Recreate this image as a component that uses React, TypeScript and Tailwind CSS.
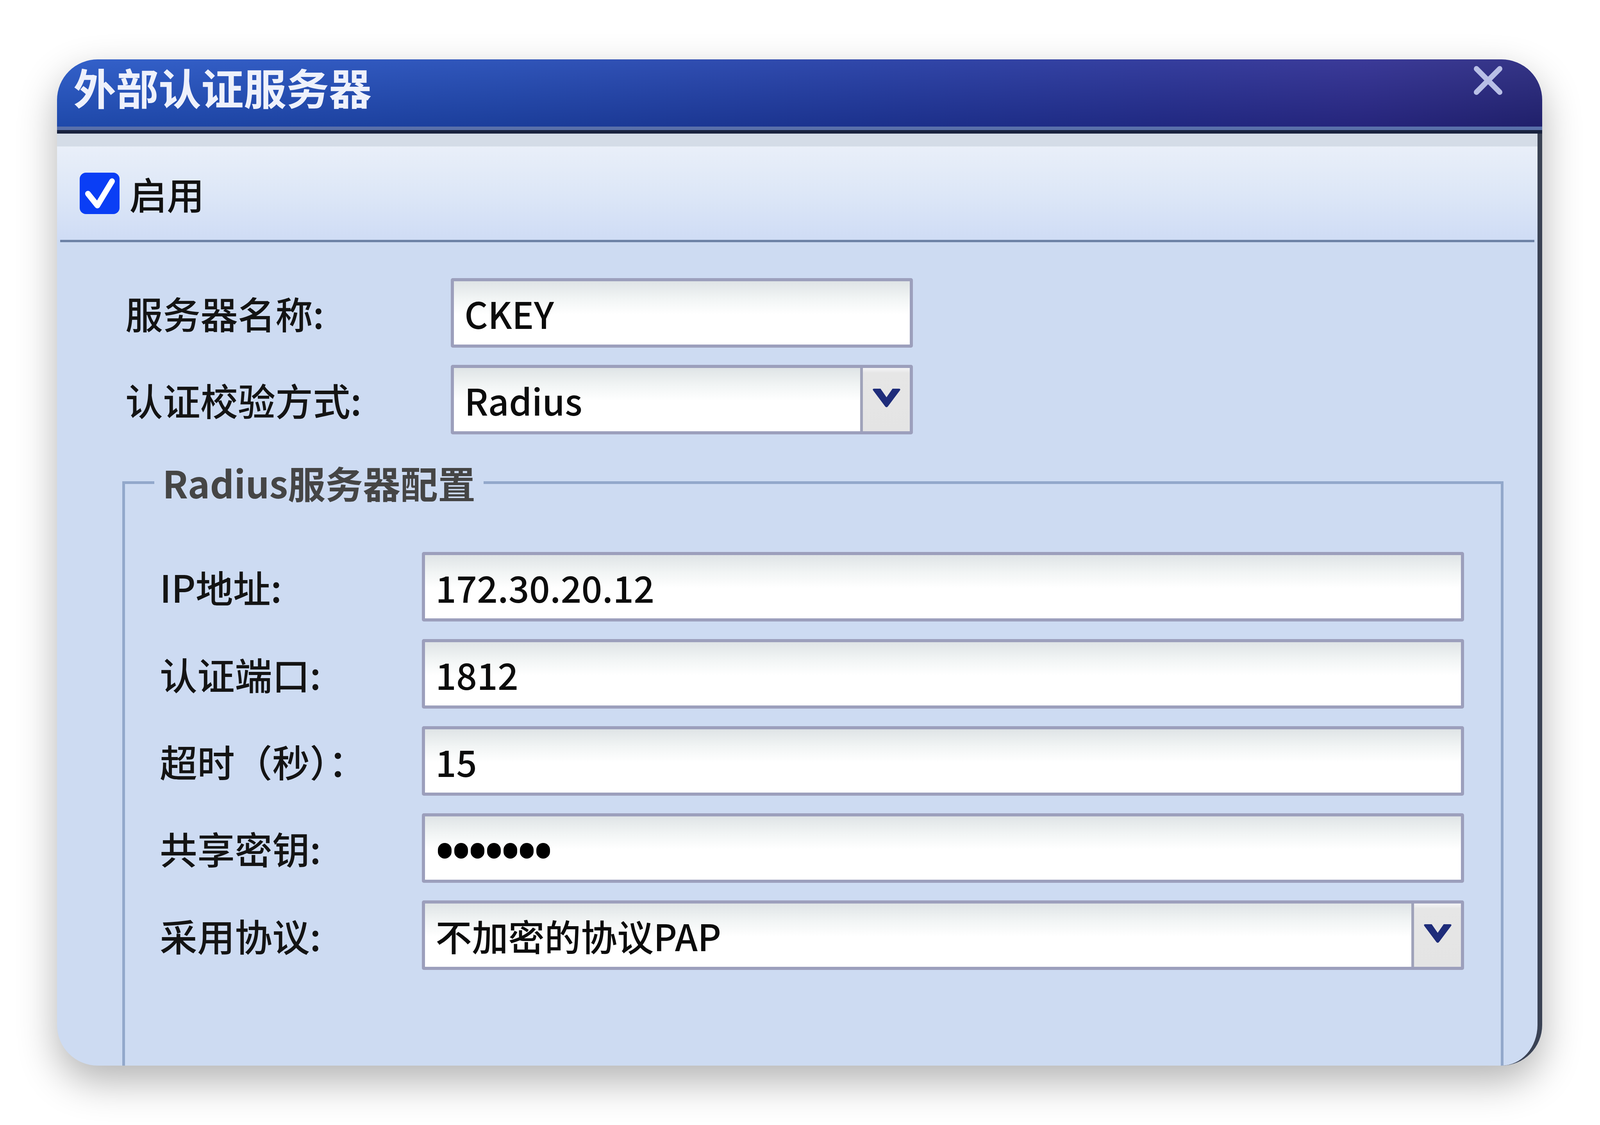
import React from "react";

function Chevron() {
  return (
    <svg width="73" height="48" viewBox="0 0 76 48" preserveAspectRatio="none" className="block">
      <path d="M2 4 Q0 0 5 0 L22 0 L38 22 L54 0 L71 0 Q76 0 74 4 L42 45 Q38 50 34 45 Z" fill="#1e2c7a" />
    </svg>
  );
}

function Box({ width, children, select }: { width: string; children: React.ReactNode; select?: boolean }) {
  return (
    <div
      className={`${width} h-[178px] flex rounded-[5px] border-[8px] border-[#9c9fbc] bg-[linear-gradient(180deg,#dfe4e6_0%,#f2f5f5_28%,#ffffff_52%)] overflow-hidden`}
    >
      <div className="flex-1 flex items-center pl-[27px] text-[93px] leading-none font-medium text-[#0c0c0c] whitespace-nowrap">
        {children}
      </div>
      {select && (
        <div className="w-[127px] shrink-0 border-l-[7px] border-[#a0a3ba] bg-[linear-gradient(180deg,#f4f4f6_0%,#e6e6e6_8%,#e4e4e4_100%)] flex items-center justify-center pb-[8px]">
          <Chevron />
        </div>
      )}
    </div>
  );
}

function Label({ children }: { children: React.ReactNode }) {
  return <div className="text-[96px] leading-none font-medium text-[#141414] whitespace-nowrap">{children}</div>;
}

export default function App() {
  return (
    <div className="w-full h-[2880px] bg-white pl-[146px] pt-[152px] font-['Noto_Sans_CJK_SC','Noto_Sans',sans-serif]">
      <div className="w-[3802px] h-[2576px] rounded-[104px] shadow-[0_40px_100px_rgba(0,0,0,0.30)] flex flex-col bg-[#cddbf2]">
        {/* Title bar */}
        <div className="h-[172px] shrink-0 rounded-t-[104px] flex items-start justify-between bg-[linear-gradient(180deg,rgba(255,255,255,0.07)_0%,rgba(0,0,0,0.14)_100%),linear-gradient(90deg,#2455c6_0%,#2048b4_30%,#2039a3_55%,#262f96_75%,#2c2b90_88%,#25257c_100%)]">
          <div className="ml-[42px] mt-[15px] text-[109px] leading-none font-bold text-[#eef1fb]">
            外部认证服务器
          </div>
          <svg className="mt-[15px] mr-[100px]" width="77" height="78" viewBox="0 0 80 78" preserveAspectRatio="none">
            <path d="M9 9 L71 69 M71 9 L9 69" stroke="#b8bfe6" strokeWidth="14" strokeLinecap="round" />
          </svg>
        </div>
        <div className="h-[9px] shrink-0 bg-[#5a70aa]" />
        <div className="h-[9px] shrink-0 bg-[#18223e]" />

        <div className="flex-1 flex flex-col border-r-[12px] border-[#3a4254] rounded-b-[104px] overflow-hidden">
          <div className="h-[33px] shrink-0 bg-[#d4dce7]" />
          {/* Enable row */}
          <div className="h-[239px] shrink-0 flex items-center pl-[58px] gap-[25px] bg-[linear-gradient(180deg,#e9eff9_0%,#dde7f7_50%,#cfdcf5_100%)]">
            <div className="w-[102px] h-[106px] rounded-[16px] bg-[#0a3ef5] flex items-center justify-center">
              <svg width="102" height="106" viewBox="0 0 106 106" preserveAspectRatio="none">
                <path d="M22 54 L47 84 L86 22" fill="none" stroke="#ffffff" strokeWidth="15" strokeLinecap="round" strokeLinejoin="round" />
              </svg>
            </div>
            <div className="text-[96px] leading-none font-medium text-[#111]">启用</div>
          </div>
          <div className="h-[6px] shrink-0 bg-[#6d82a6] mx-[8px]" />

          {/* Body */}
          <div className="flex-1 pl-[167px] pt-[92px] flex flex-col">
            <div className="pl-[8px] grid grid-cols-[833px_1183px] gap-y-[44px] items-center">
              <Label>服务器名称:</Label>
              <Box width="w-[1183px]">CKEY</Box>
              <Label>认证校验方式:</Label>
              <Box width="w-[1183px]" select>
                Radius
              </Box>
            </div>

            <fieldset className="mt-[63px] w-[3536px] h-[1700px] border-[7px] border-[#92a8cb] p-0 m-0 shrink-0">
              <legend className="ml-[75px] px-[21px] text-[96px] leading-[1.25] font-bold text-[#454545]">
                Radius服务器配置
              </legend>
              <div className="pl-[89px] pt-[118px] grid grid-cols-[671px_2668px] gap-y-[45px] items-center">
                <Label>IP地址:</Label>
                <Box width="w-[2668px]">172.30.20.12</Box>
                <Label>认证端口:</Label>
                <Box width="w-[2668px]">1812</Box>
                <Label>超时（秒）：</Label>
                <Box width="w-[2668px]">15</Box>
                <Label>共享密钥:</Label>
                <Box width="w-[2668px]">
                  <div className="flex gap-[7px] pt-[14px] pl-[6px]">
                    {Array.from({ length: 7 }).map((_, i) => (
                      <div key={i} className="w-[35px] h-[40px] rounded-full bg-black" />
                    ))}
                  </div>
                </Box>
                <Label>采用协议:</Label>
                <Box width="w-[2668px]" select>
                  不加密的协议PAP
                </Box>
              </div>
            </fieldset>
          </div>
        </div>
      </div>
    </div>
  );
}
